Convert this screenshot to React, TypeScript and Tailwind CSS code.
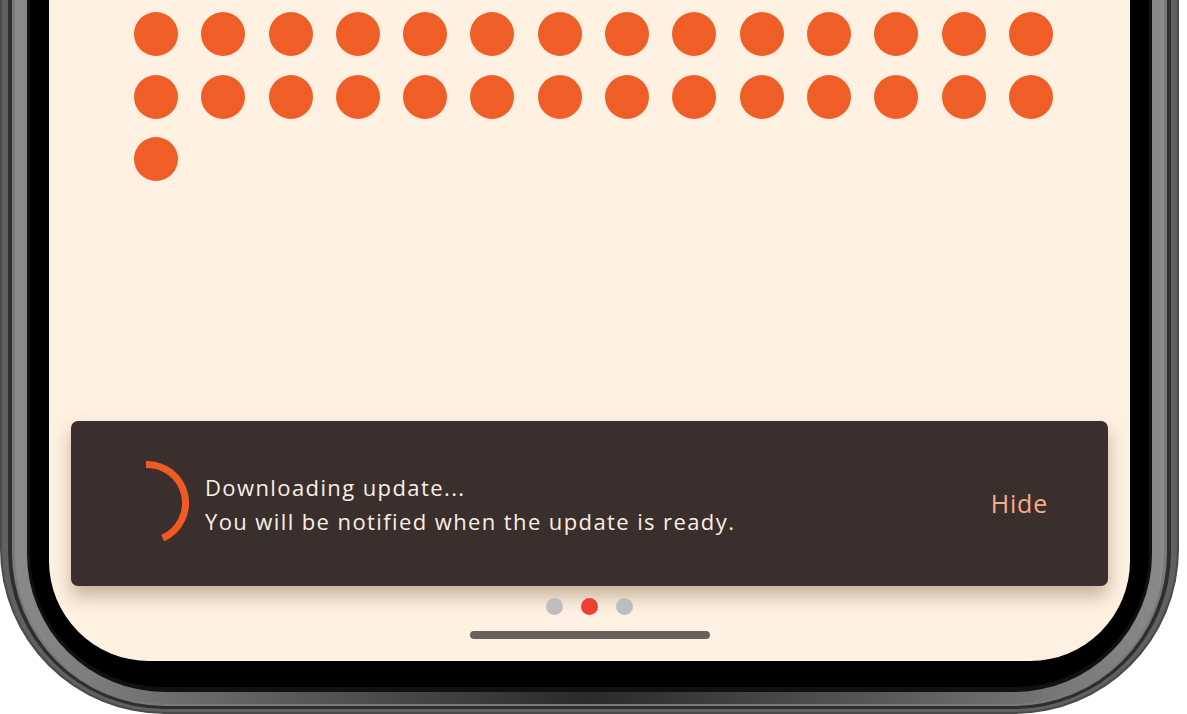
import React from "react";

const font = { fontFamily: '"Open Sans", "Liberation Sans", sans-serif' };

function Spinner() {
  const r = 38.5;
  const cx = 42;
  const cy = 42;
  const end = (156 * Math.PI) / 180;
  const x2 = cx + r * Math.sin(end);
  const y2 = cy - r * Math.cos(end);
  return (
    <svg width="84" height="84" viewBox="0 0 84 84" className="shrink-0 -mt-[2px]">
      <path
        d={`M ${cx - 1} ${cy - r} A ${r} ${r} 0 0 1 ${x2} ${y2}`}
        fill="none"
        stroke="#f05a24"
        strokeWidth="7"
      />
    </svg>
  );
}

export default function App() {
  const dots = Array.from({ length: 29 });
  return (
    <div className="w-[1187px] h-[714px] bg-white overflow-hidden" style={font}>
      <div className="w-[1179px] h-[714px] bg-[#4a4a4a] rounded-b-[165px] px-[2px] pb-[2px]">
        <div className="h-full bg-[#606060] rounded-b-[163px] px-[6px] pb-[3px]">
          <div className="h-full bg-[#2e2e2e] rounded-b-[157px] px-[4px] pb-[3px]">
            <div className="h-full bg-[#7a7a7a] rounded-b-[153px] px-[3px] pb-[2px]">
              <div className="h-full bg-gradient-to-r from-[#8a8a8a] via-[#2a2a2a] to-[#8a8a8a] rounded-b-[150px] px-[12px] pb-[12px]">
                <div className="h-full bg-[#111111] rounded-b-[138px] px-[3px] pb-[5px]">
                  <div className="h-full bg-black rounded-b-[133px] px-[19px] pb-[26px]">
                    <div className="h-full bg-[#fef1e2] rounded-b-[100px] flex flex-col overflow-hidden">
                      <div className="pt-[12px] pl-[85px] grid grid-cols-[repeat(14,44px)] gap-x-[23.3px] gap-y-[18.5px]">
                        {dots.map((_, i) => (
                          <div key={i} className="w-[44px] h-[44px] rounded-full bg-[#f05e28]" />
                        ))}
                      </div>
                      <div className="flex-1" />
                      <div className="mx-[22px] h-[165px] rounded-[7px] bg-[#3a2f2d] shadow-[0_10px_18px_rgba(110,80,45,0.4)] flex items-center pl-[34px] pr-[60px]">
                        <Spinner />
                        <div className="ml-[16px] flex-1 text-[22px] font-medium leading-[34px] text-[#fbeee6] tracking-[1.4px]">
                          <div>Downloading update...</div>
                          <div>You will be notified when the update is ready.</div>
                        </div>
                        <div className="text-[25px] font-medium tracking-[0.8px] text-[#f8ab8b]">Hide</div>
                      </div>
                      <div className="mt-[12px] flex justify-center gap-[18px]">
                        <div className="w-[17px] h-[17px] rounded-full bg-[#bdbdbd]" />
                        <div className="w-[17px] h-[17px] rounded-full bg-[#ef3f34]" />
                        <div className="w-[17px] h-[17px] rounded-full bg-[#bdbdbd]" />
                      </div>
                      <div className="mt-[16px] mb-[22px] self-center w-[240px] h-[8px] rounded-full bg-[#68625c]" />
                    </div>
                  </div>
                </div>
              </div>
            </div>
          </div>
        </div>
      </div>
    </div>
  );
}
